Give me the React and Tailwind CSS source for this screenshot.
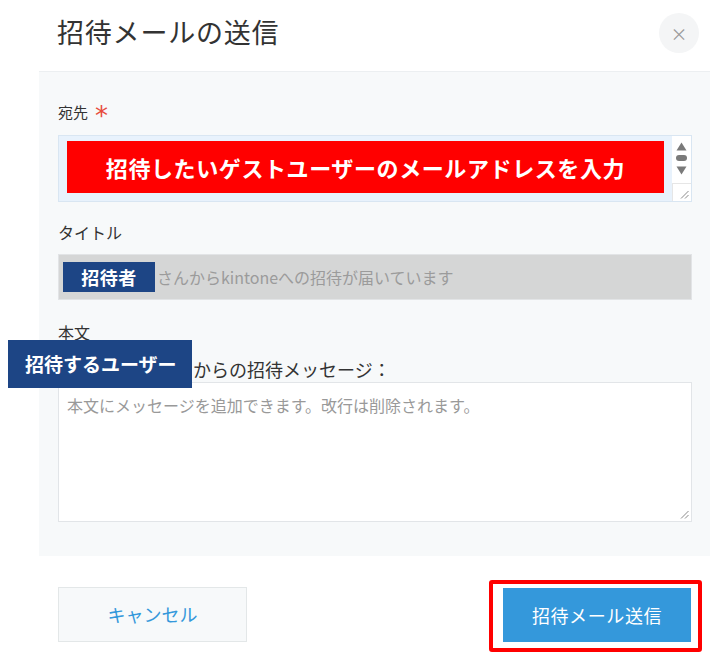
import React from "react";

const FONT = { fontFamily: '"Noto Sans CJK JP", "Noto Sans", sans-serif' };

export default function App() {
  return (
    <div className="relative w-[718px] h-[660px] bg-white text-[#333333] overflow-hidden" style={FONT}>
      {/* Header */}
      <div className="flex items-start justify-between h-[71px] pl-[57px] pr-[19px]">
        <h1 className="mt-[13px] text-[27px] leading-[38px] font-normal text-[#333333] tracking-[0.8px]">招待メールの送信</h1>
        <button className="mt-[13px] w-[40px] h-[40px] rounded-full bg-[#f4f5f6] flex items-center justify-center text-[#9a9a9a] text-[17px] leading-none">×</button>
      </div>

      {/* Body panel */}
      <div className="ml-[39px] w-[671px] h-[485px] bg-[#f7f9fa] border-t border-[#eceff1] pl-[19px] pr-[18px] pt-[30px]">
        <div className="flex items-center h-[20px] text-[15px] leading-[20px]">
          <span>宛先</span>
          <span className="ml-[7px] text-[#e74c3c] text-[26px] leading-[20px] mt-[8px]" style={{ fontFamily: '"DejaVu Sans", sans-serif' }}>*</span>
        </div>

        {/* 宛先 textarea */}
        <div className="mt-[13px] h-[67px] border border-[#d9e6f2] bg-[#e8f2fc] flex">
          <div className="flex-1 pl-[8px] pt-[5px] pr-[8px]">
            <div className="h-[52px] bg-[#ff0000] flex items-center justify-center text-white text-[22px] font-bold tracking-[0.6px]">
              招待したいゲストユーザーのメールアドレスを入力
            </div>
          </div>
          <div className="w-[19px] bg-white flex flex-col">
            <div className="h-[47px] flex flex-col items-center pt-[6px]">
              <svg width="11" height="9" viewBox="0 0 11 9"><path d="M5.5 0.5 L10.5 8.5 L0.5 8.5 Z" fill="#7a7a7a" /></svg>
              <div className="mt-[4px] w-[11px] h-[6px] rounded-[3px] bg-[#7a7a7a]" />
              <svg className="mt-[5px]" width="11" height="9" viewBox="0 0 11 9"><path d="M0.5 0.5 L10.5 0.5 L5.5 8.5 Z" fill="#7a7a7a" /></svg>
            </div>
            <div className="flex-1 border-t border-l border-[#e6e6e6] bg-white flex items-end justify-end pr-[2px] pb-[2px]">
              <svg width="9" height="9" viewBox="0 0 9 9"><path d="M8.5 1 L1 8.5 M8.5 5 L5 8.5" stroke="#8a8a8a" strokeWidth="1" /></svg>
            </div>
          </div>
        </div>

        {/* タイトル */}
        <div className="mt-[20px] h-[20px] text-[16px] leading-[20px]">タイトル</div>
        <div className="mt-[12px] h-[46px] border border-[#e2e4e6] bg-[#d5d6d6] flex items-center pl-[4px]">
          <div className="w-[92px] h-[30px] bg-[#1d4585] text-white text-[18px] font-bold flex items-center justify-center tracking-[0.5px]">招待者</div>
          <span className="ml-[2px] text-[16px] text-[#9b9b9b]">さんからkintoneへの招待が届いています</span>
        </div>

        {/* 本文 */}
        <div className="mt-[22px] h-[20px] text-[16px] leading-[20px]">本文</div>
        <div className="mt-[14px] h-[26px] text-[18px] leading-[26px] pl-[135px]">からの招待メッセージ：</div>
        <div className="h-[140px] border border-[#e2e5e8] bg-white relative">
          <div className="pl-[8px] pt-[11px] text-[16px] leading-[22px] text-[#999999]">本文にメッセージを追加できます。改行は削除されます。</div>
          <svg className="absolute right-[2px] bottom-[2px]" width="9" height="9" viewBox="0 0 9 9"><path d="M8.5 1 L1 8.5 M8.5 5 L5 8.5" stroke="#8a8a8a" strokeWidth="1" /></svg>
        </div>
      </div>

      {/* Footer */}
      <div className="flex items-start justify-between pl-[58px] pr-[16px] pt-[24px]">
        <button className="mt-[7px] w-[189px] h-[55px] border border-[#e3e7e8] bg-[#f7f9fa] text-[#3498db] text-[18px]">キャンセル</button>
        <div className="w-[213px] h-[72px] border-[4px] border-[#ff0000] rounded-[3px] pl-[10px] pt-[4px]">
          <button className="w-[188px] h-[54px] bg-[#3498db] text-white text-[18px] tracking-[0.6px]">招待メール送信</button>
        </div>
      </div>

      {/* Overlay annotation */}
      <div className="absolute left-[8px] top-[340px] w-[184px] h-[48px] bg-[#1d4585] text-white text-[19px] font-bold flex items-center pl-[17px]">
        招待するユーザー
      </div>
    </div>
  );
}
